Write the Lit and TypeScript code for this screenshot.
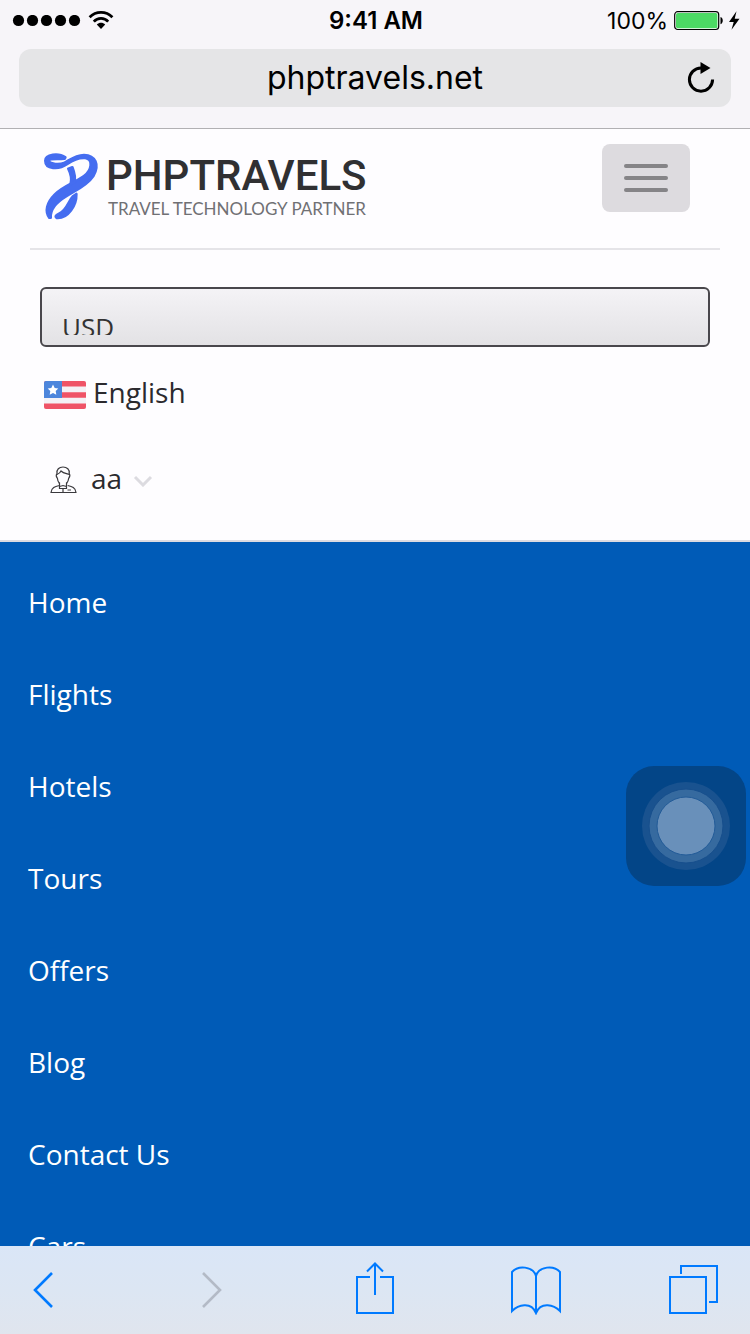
import { LitElement, html, css, svg } from "lit";
import { customElement, property, state } from "lit/decorators.js";

@customElement("status-bar")
class StatusBar extends LitElement {
  static styles = css`
    :host {
      display: grid;
      grid-template-columns: 1fr auto 1fr;
      align-items: center;
      box-sizing: border-box;
      height: 40px;
      padding: 2px 10px 0 12px;
      font: 400 23px/38px Inter, sans-serif;
      color: #000;
    }
    .signal,
    .power {
      display: flex;
      align-items: center;
    }
    .signal {
      gap: 7px;
    }
    .power {
      justify-content: flex-end;
      gap: 6px;
    }
    .time {
      font-size: 24px;
      font-weight: 600;
    }
    svg {
      display: block;
    }
  `;

  render() {
    return html`
      <div class="signal">
        <svg width="69" height="12" viewBox="0 0 69 12" aria-hidden="true">
          ${[6.5, 20.5, 34.5, 48.5, 62.5].map((x) => svg`<circle cx=${x} cy="5.500" r="5.600" />`)}
        </svg>
        <svg width="26" height="20" viewBox="0 0 26 20" aria-hidden="true">
          <g fill="none" stroke="#000" stroke-width="2.800">
            <path d="M1.600 6.200C8 -.2 18 -.2 24.400 6.200" />
            <path d="M5.800 10.600C9.800 6.400 16.200 6.400 20.200 10.600" />
          </g>
          <path d="M8.800 13.400c2.400-2.200 6-2.200 8.400 0L13 18z" />
        </svg>
      </div>
      <div class="time">9:41 AM</div>
      <div class="power">
        <span>100%</span>
        <svg width="66" height="20" viewBox="0 0 66 20" aria-hidden="true">
          <rect x=".7" y=".7" width="44" height="17.800" rx="3" fill="#fff" stroke="#000" stroke-width="1.200" />
          <rect x="2" y="2" width="41.400" height="15.200" rx="1.800" fill="#4cd964" />
          <path d="M46.500 6c3 .8 3 6.400 0 7.200z" />
          <path d="M62.500 .3L55 11h4.700L57.500 18.700 65.500 7.800h-4.800z" />
        </svg>
      </div>
    `;
  }
}

@customElement("address-bar")
class AddressBar extends LitElement {
  @property() address = "";

  static styles = css`
    :host {
      display: block;
      padding: 9px 19px 21px;
    }
    .field {
      display: grid;
      grid-template-columns: 44px 1fr 44px;
      align-items: center;
      height: 58px;
      padding: 0 8px;
      border-radius: 12px;
      background: #e5e5e7;
    }
    .address {
      grid-column: 2;
      min-width: 0;
      border: 0;
      padding: 0;
      background: none;
      color: #000;
      font: 400 32px/40px Inter, sans-serif;
      text-align: center;
      outline: none;
    }
    .reload {
      display: grid;
      place-items: center;
      height: 44px;
      border: 0;
      padding: 0;
      background: none;
    }
  `;

  render() {
    return html`
      <div class="field">
        <input class="address" type="text" aria-label="Address" .value=${this.address} />
        <button class="reload" aria-label="Reload">
          <svg width="28" height="32" viewBox="0 0 28 32" aria-hidden="true">
            <path d="M14 6A11.600 11.600 0 1 0 25.600 17.600" fill="none" stroke="#000" stroke-width="3" />
            <path d="M13.500 0L23.500 6 13.500 12z" />
          </svg>
        </button>
      </div>
    `;
  }
}

@customElement("site-header")
class SiteHeader extends LitElement {
  static styles = css`
    :host {
      display: block;
      background: #fefdff;
      color: #2b2a2e;
      font: 400 28px/40px "Open Sans", sans-serif;
      border-bottom: 2px solid #dcdbe1;
      padding-bottom: 42px;
    }
    svg {
      display: block;
    }
    .brand-row {
      display: flex;
      justify-content: space-between;
      align-items: flex-start;
      margin: 0 30px;
      padding: 15px 30px 24px 8px;
      border-bottom: 2px solid #e5e4e8;
    }
    .brand {
      display: flex;
      text-decoration: none;
      padding-top: 4px;
    }
    .words {
      display: flex;
      flex-direction: column;
      padding: 4px 0 0 2px;
    }
    .name {
      color: #303032;
      font: 500 42px/48px Roboto, sans-serif;
    }
    .tagline {
      padding-left: 2px;
      color: #707074;
      font: 400 17px/18px Lato, sans-serif;
    }
    .toggle {
      display: flex;
      flex-direction: column;
      align-items: center;
      justify-content: center;
      gap: 8px;
      width: 88px;
      height: 68px;
      border: 0;
      border-radius: 8px;
      padding: 0;
      background: #dddbdf;
    }
    .bar {
      width: 44px;
      height: 4px;
      border-radius: 2px;
      background: #858487;
    }
    .settings {
      padding: 37px 40px 0;
    }
    .currency {
      appearance: none;
      display: block;
      box-sizing: border-box;
      width: 100%;
      height: 60px;
      border: 2px solid #49474c;
      border-radius: 6px;
      padding: 20px 20px 10px;
      background: linear-gradient(#f4f3f6, #e3e2e5);
      color: #333;
      font: 400 26px/36px "Open Sans", sans-serif;
    }
    .language,
    .account {
      display: flex;
      align-items: center;
      border: 0;
      background: none;
      color: inherit;
      font: inherit;
    }
    .language {
      gap: 7px;
      margin-top: 25px;
      padding: 0 4px;
    }
    .language svg {
      padding-top: 5px;
    }
    .account {
      margin-top: 46px;
      padding: 0 10px;
    }
    .account svg {
      padding-top: 4px;
    }
    .account-name {
      padding: 0 11px 0 14px;
    }
  `;

  render() {
    return html`
      <div class="brand-row">
        <a class="brand" href="#" aria-label="PHPTRAVELS Travel Technology Partner">
          <svg width="66" height="76" viewBox="0 0 198 228" aria-hidden="true">
            <g fill="#456df0" stroke="#456df0" stroke-width="8" stroke-linejoin="round">
              <path
                d="M82 28C62 14 22 18 22 38C22 64 62 66 88 48C108 34 122 28 142 30C166 34 162 66 138 84C108 106 76 114 50 140C26 164 20 190 34 209L38 209C36 182 56 162 84 145C112 128 148 112 166 84C186 50 172 22 138 21C112 22 98 34 80 44C62 52 40 48 30 40C32 30 52 34 80 32Z"
              />
              <path d="M91 62L103 58C110 76 112 92 109 103L98 108C102 94 98 76 91 62Z" />
              <path d="M115 138C116 172 90 212 57 210C50 206 54 202 62 198C88 186 90 160 104 146Z" />
            </g>
          </svg>
          <span class="words">
            <span class="name">PHPTRAVELS</span>
            <span class="tagline">TRAVEL TECHNOLOGY PARTNER</span>
          </span>
        </a>
        <button class="toggle" aria-label="Toggle navigation">
          <span class="bar"></span><span class="bar"></span><span class="bar"></span>
        </button>
      </div>
      <div class="settings">
        <select class="currency" aria-label="Currency">
          <option>USD</option>
        </select>
        <button class="language">
          <svg width="42" height="28" viewBox="0 0 42 28" aria-hidden="true">
            <clipPath id="flag"><rect width="42" height="28" rx="2" /></clipPath>
            <g clip-path="url(#flag)">
              <rect width="42" height="28" fill="#f4f2f6" />
              <path d="M0 0h42v5.600H0zM0 11.200h42v5.600H0zM0 22.600h42V28H0z" fill="#ef5467" />
              <rect width="18" height="17" fill="#4d86dc" />
              <path d="M9 3.600l1.700 3.300 3.600.6-2.600 2.600.6 3.700L9 12.100l-3.300 1.700.6-3.700-2.600-2.600 3.600-.6z" fill="#fff" />
            </g>
          </svg>
          English
        </button>
        <button class="account">
          <svg width="27" height="28" viewBox="0 0 27 28" fill="none" stroke="#3a393d" stroke-width="1.200" aria-hidden="true">
            <path d="M9.500 17.500c-1.400-1.500-2-3.400-2.100-5.200C6 10.500 6.200 8.500 7 7.500 6.500 3.500 9 1 13 1s6.800 2.500 6.200 6.500c.8 1 .8 3-.5 4.800-.2 1.900-.8 3.700-2.200 5.200" />
            <path d="M7 8.500C9.500 7.500 10.500 6 11 5c2 2 5 2.500 8.200 3.500" />
            <path d="M9.500 16.500v4l3.500-1 3.500 1v-4M9.300 19.500C5 20.500 1.500 21.500 1 26.500h25c-.5-5-4-6-8.300-7M9.500 20.500v2h7v-2M13 22.500v4M17.500 24h3.500" />
          </svg>
          <span class="account-name">aa</span>
          <svg width="20" height="14" viewBox="0 0 20 14" aria-hidden="true">
            <path d="M2 4l8 8 8-8" fill="none" stroke="#dcdbe0" stroke-width="3" />
          </svg>
        </button>
      </div>
    `;
  }
}

@customElement("site-menu")
class SiteMenu extends LitElement {
  @property({ attribute: false }) items: string[] = [];

  static styles = css`
    :host {
      display: block;
      background: #005bb7;
    }
    ul {
      list-style: none;
      margin: 0;
      padding: 14px 0;
    }
    a {
      display: block;
      padding: 26px 28px;
      color: #fff;
      font: 400 28px/40px "Open Sans", sans-serif;
      text-decoration: none;
    }
  `;

  render() {
    return html`<nav>
      <ul>
        ${this.items.map((item) => html`<li><a href="#">${item}</a></li>`)}
      </ul>
    </nav>`;
  }
}

@customElement("browser-toolbar")
class BrowserToolbar extends LitElement {
  static styles = css`
    :host {
      display: flex;
      justify-content: space-between;
      height: 88px;
      padding: 0 31px 0 8px;
      background: linear-gradient(#dae6f7, #dce6f3 50%, #e0e5ee);
    }
    button {
      display: grid;
      place-items: center;
      width: 56px;
      border: 0;
      padding: 0;
      background: none;
      color: #007aff;
    }
    button:disabled {
      color: #b3bac6;
    }
    .back {
      width: 70px;
    }
    .forward {
      width: 58px;
    }
    .tabs {
      width: 50px;
    }
    svg {
      display: block;
      fill: none;
      stroke: currentColor;
      stroke-width: 2;
    }
  `;

  render() {
    return html`
      <button class="back" aria-label="Back">
        <svg width="20" height="38" viewBox="0 0 20 38">
          <path d="M19 2L2 19l17 17" stroke-width="2.600" />
        </svg>
      </button>
      <button class="forward" aria-label="Forward" disabled>
        <svg width="20" height="38" viewBox="0 0 20 38">
          <path d="M1 2l17 17L1 36" stroke-width="2.600" />
        </svg>
      </button>
      <button aria-label="Share">
        <svg width="38" height="56" viewBox="0 0 38 56">
          <path d="M14 15H1v36h36V15H24M19 33V1.500M11 9.500l8-8 8 8" />
        </svg>
      </button>
      <button aria-label="Bookmarks">
        <svg width="50" height="50" viewBox="0 0 50 50">
          <path d="M25 48V11C22 1 7 0 1 7v39c6-6 19-10 24 2 5-12 18-8 24-2V7C43 0 28 1 25 11" />
        </svg>
      </button>
      <button class="tabs" aria-label="Tabs">
        <svg width="50" height="52" viewBox="0 0 50 52">
          <path d="M1 13h36v36H1zM12 10V2h36v36h-8" />
        </svg>
      </button>
    `;
  }
}

@customElement("app-root")
class AppRoot extends LitElement {
  @state() private items = [
    "Home",
    "Flights",
    "Hotels",
    "Tours",
    "Offers",
    "Blog",
    "Contact Us",
    "Cars",
  ];

  static styles = css`
    :host {
      display: flex;
      flex-direction: column;
      height: 100vh;
      background: #005bb7;
    }
    .chrome {
      flex: none;
      background: #f7f5f9;
      border-bottom: 1px solid #b1b0b3;
    }
    .page {
      flex: 1;
      min-height: 0;
      overflow: hidden;
    }
    browser-toolbar {
      flex: none;
    }
    .assist {
      position: fixed;
      right: 4px;
      top: 766px;
      width: 120px;
      height: 120px;
      border: 0;
      border-radius: 28px;
      padding: 0;
      background: #034587;
    }
    .assist svg {
      display: block;
    }
  `;

  render() {
    return html`
      <header class="chrome">
        <status-bar></status-bar>
        <address-bar address="phptravels.net"></address-bar>
      </header>
      <main class="page">
        <site-header></site-header>
        <site-menu .items=${this.items}></site-menu>
      </main>
      <browser-toolbar></browser-toolbar>
      <button class="assist" aria-label="Assistive touch">
        <svg width="120" height="120" viewBox="0 0 120 120" aria-hidden="true">
          <circle cx="60" cy="60" r="44" fill="#19528f" />
          <circle cx="60" cy="60" r="37" fill="#366a9f" stroke="#174f8d" />
          <circle cx="60" cy="60" r="29" fill="#6990ba" stroke="#225b98" />
        </svg>
      </button>
    `;
  }
}
